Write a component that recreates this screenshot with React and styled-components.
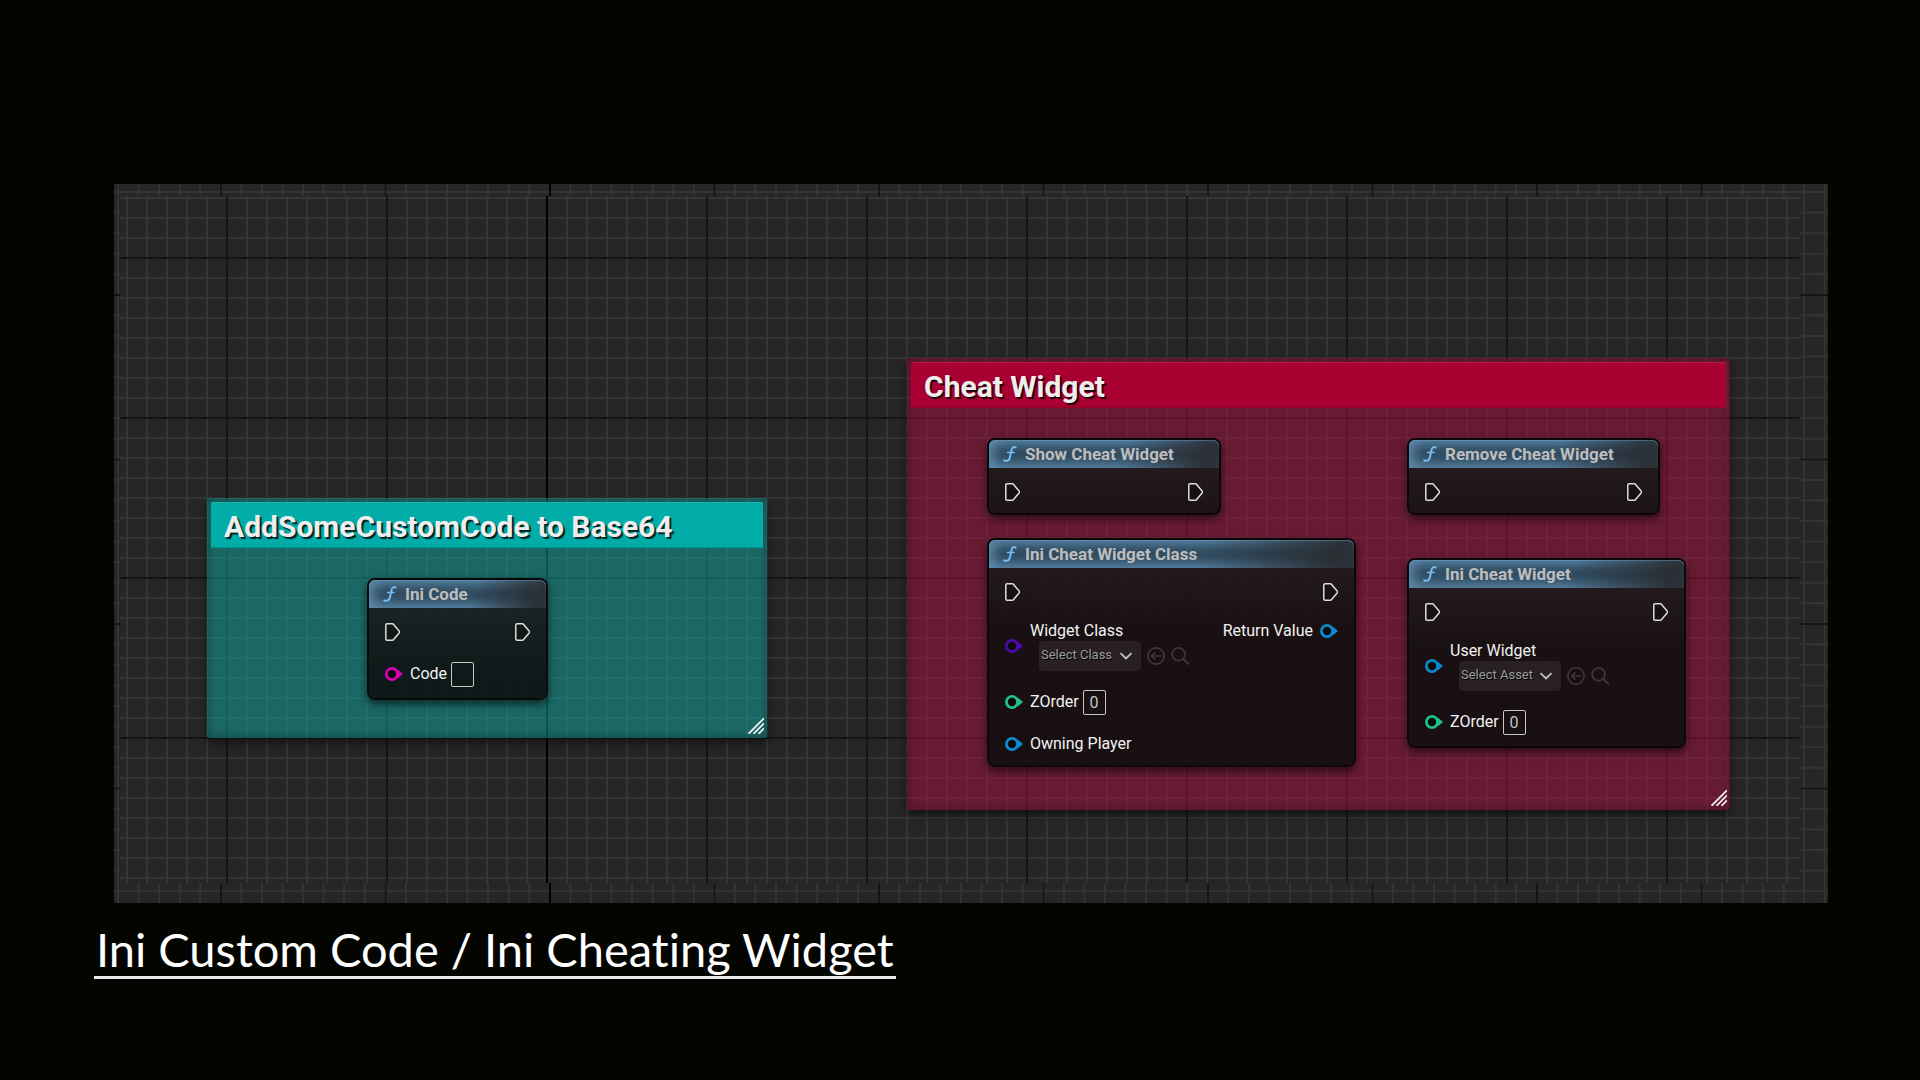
import React, { useId } from "react";
import styled, { createGlobalStyle } from "styled-components";

const GlobalStyle = createGlobalStyle`
  *, *::before, *::after { box-sizing: border-box; }
  body {
    margin: 0;
    background: #040500;
    color: #f0f0f0;
    font-family: Roboto, "Noto Sans", sans-serif;
  }
`;

const Page = styled.main`
  display: flex;
  flex-direction: column;
  min-height: 100vh;
  padding: 184px 92px 0 94px;
`;

const Backdrop = styled.section`
  --step: calc(329px / 16);
  --major: calc(329px / 2);
  margin-left: 20px;
  padding: 12px 28px 20px 6px;
  background-color: #262626;
  background-image:
    linear-gradient(90deg, #000 2px, transparent 2px),
    linear-gradient(90deg, #151515 2px, transparent 2px),
    linear-gradient(#151515 2px, transparent 2px),
    linear-gradient(90deg, #343434 2px, transparent 2px),
    linear-gradient(#343434 2px, transparent 2px);
  background-size: 2000px 100%, var(--major) 100%, 100% var(--major), var(--step) 100%, 100% var(--step);
  background-position: 435px 0, 106px 0, 0 110px, 3px 0, 0 7px;
`;

const Canvas = styled.div`
  position: relative;
  min-height: 687px;
  background-color: #262626;
  background-image:
    linear-gradient(90deg, #000 2px, transparent 2px),
    linear-gradient(90deg, #161616 2px, transparent 2px),
    linear-gradient(#161616 2px, transparent 2px),
    linear-gradient(90deg, #353535 2px, transparent 2px),
    linear-gradient(#353535 2px, transparent 2px);
  background-size: 2000px 100%, 160px 100%, 100% 160px, 20px 100%, 100% 20px;
  background-position: 426px 0, 106px 0, 0 61px, 6px 0, 0 1px;
`;

const Comment = styled.article`
  position: absolute;
  left: ${(p) => p.$x}px;
  top: ${(p) => p.$y}px;
  width: ${(p) => p.$w}px;
  height: ${(p) => p.$h}px;
  padding: 4px;
  border-radius: 2px;
  background: rgba(${(p) => p.$body}, 0.5);
  box-shadow:
    0 5px 10px rgba(0, 0, 0, 0.5),
    inset 0 0 0 1px rgba(${(p) => p.$body}, 0.15),
    inset 0 0 9px rgba(0, 0, 0, 0.4);
`;

const CommentTitle = styled.h2`
  margin: 0;
  height: 46px;
  padding: 0 13px;
  border-radius: 2px 2px 0 0;
  background: ${(p) => p.$color};
  box-shadow: inset 0 1px 1px rgba(255, 255, 255, 0.12), inset 0 -1px 1px rgba(0, 0, 0, 0.15);
  color: #eee;
  font-size: 30px;
  font-weight: 700;
  line-height: 50px;
  text-shadow: 2px 2px 1px rgba(0, 0, 0, 0.8);
  white-space: nowrap;
`;

const Grip = styled.svg`
  position: absolute;
  right: 3px;
  bottom: 4px;
`;

const NodeBox = styled.article`
  position: absolute;
  left: ${(p) => p.$x}px;
  top: ${(p) => p.$y}px;
  width: ${(p) => p.$w}px;
  border: 2px solid #090909;
  border-radius: 8px;
  background: linear-gradient(rgba(26, 26, 26, 0.88) 28px, rgba(14, 14, 14, 0.88) 90px);
  background-clip: padding-box;
  box-shadow: 0 4px 9px rgba(0, 0, 0, 0.6);
`;

const NodeHeader = styled.header`
  position: relative;
  isolation: isolate;
  display: flex;
  align-items: center;
  gap: 8px;
  height: 28px;
  padding: 0 13px 0 14px;
  border-radius: 6px 6px 0 0;
  background: #2b4558;
  box-shadow: inset 0 0 13px 4px #6090b5;

  &::after {
    content: "";
    position: absolute;
    inset: 0;
    z-index: -1;
    border-radius: inherit;
    background: linear-gradient(112deg, rgba(40, 42, 46, 0) 58%, rgba(40, 42, 46, 0.9) 94%);
    box-shadow: inset 0 1px 1px rgba(120, 165, 200, 0.45);
  }
`;

const NodeTitle = styled.h3`
  margin: 0;
  color: #bdbdbd;
  font-size: 17px;
  font-weight: 700;
  line-height: 28px;
  white-space: nowrap;
`;

const NodeBody = styled.div`
  display: flex;
  flex-direction: column;
  gap: 17px;
  padding: 13px 16px 10px 16px;
`;

const Row = styled.div`
  display: flex;
  justify-content: space-between;
  align-items: flex-start;
`;

const Pin = styled.div`
  display: flex;
  align-items: center;
  gap: 7px;
  min-height: ${(p) => p.$h || 22}px;
  color: #f2f2f2;
  font-size: 16px;
  line-height: 20px;
  white-space: nowrap;
`;

const ValueField = styled.div`
  display: flex;
  align-items: center;
  gap: 4px;
`;

const ValueInput = styled.input`
  width: 23px;
  height: 25px;
  padding: 0;
  border: 1px solid #c8c8c8;
  border-radius: 2px;
  background: transparent;
  color: #c4c4c4;
  font: 16px Roboto, sans-serif;
  text-align: center;
`;

const AssetField = styled.div`
  display: flex;
  flex-direction: column;
  padding-top: 1px;
`;

const AssetTools = styled.div`
  display: flex;
  align-items: center;
  gap: 6px;
  padding-left: 9px;
`;

const SelectWrap = styled.div`
  display: grid;
  align-items: center;
  & > * { grid-area: 1 / 1; }
  & > svg { justify-self: end; margin-right: 8px; pointer-events: none; }
`;

const AssetSelect = styled.select`
  appearance: none;
  width: 102px;
  height: 30px;
  padding: 0 24px 3px 2px;
  border: 0;
  border-radius: 4px;
  background: rgba(255, 255, 255, 0.07);
  color: #9c9c9c;
  font: 13px Roboto, sans-serif;
  text-shadow: 1px 1px 0 #000;
`;

const IconButton = styled.button`
  display: flex;
  padding: 0;
  border: 0;
  background: none;
  color: #403638;
`;

const Caption = styled.h1`
  margin: 19px 0 0;
  padding: 0 2px;
  align-self: flex-start;
  border-bottom: 3px solid #e8e8e8;
  color: #fff;
  font-family: Lato, "Noto Sans", sans-serif;
  font-size: 47px;
  font-weight: 400;
  font-variant-ligatures: none;
  line-height: 54px;
  white-space: nowrap;
`;

const ExecIcon = () => (
  <svg width="15" height="18" viewBox="0 0 15 18" fill="rgba(0,0,0,.25)" stroke="#dcdcdc" strokeWidth="1.5" strokeLinejoin="round">
    <path d="M2 .8h5.2c.6 0 1 .2 1.400.6l5.700 6.900c.3.4.3 1 0 1.400l-5.700 6.900c-.4.4-.8.6-1.400.6H2c-.8 0-1.200-.4-1.200-1.200V2C.8 1.200 1.200.8 2 .8z" />
  </svg>
);

const DataIcon = ({ color }) => (
  <svg width="18" height="14" viewBox="0 0 18 14">
    <path d="M13 2.800 18 7l-5 4.200z" fill={color} />
    <circle cx="7" cy="7" r="5.600" fill="#0b0b0b" stroke={color} strokeWidth="2.800" />
  </svg>
);

const FunctionIcon = () => (
  <svg width="14" height="16" viewBox="0 0 14 16" fill="none" stroke="#72bdf2" strokeLinecap="round">
    <path d="M12.600 1.500c-1.800-.9-3.500-.2-4 2.200L6.900 11.500c-.5 2.600-2.600 3.900-5.700 3" strokeWidth="2" />
    <path d="M4.500 6.500h6.600" strokeWidth="1.600" />
  </svg>
);

const Chevron = () => (
  <svg width="14" height="8" viewBox="0 0 14 8" fill="none" stroke="#c4c4c4" strokeWidth="1.800">
    <path d="M1.500 1.200 7 6.500l5.500-5.300" />
  </svg>
);

const BackIcon = () => (
  <svg width="18" height="18" viewBox="0 0 18 18" fill="none" stroke="currentColor" strokeWidth="1.700">
    <circle cx="9" cy="9" r="8.100" />
    <path d="M13.800 9H5M8.400 5.400 4.800 9l3.600 3.600" />
  </svg>
);

const SearchIcon = () => (
  <svg width="19" height="18" viewBox="0 0 19 18" fill="none" stroke="currentColor" strokeWidth="1.800">
    <circle cx="7.600" cy="7.300" r="6.400" />
    <path d="m12.300 11.800 5.700 5.700" />
  </svg>
);

const ResizeGrip = () => (
  <Grip width="16" height="16" viewBox="0 0 16 16" stroke="#f2f2f2" strokeWidth="1.800">
    <path d="M.5 15.800 16 .3M5.500 15.800 16 5.300M10.500 15.800l5.500-5.500" />
  </Grip>
);

const BLUE = "#0c8ad0";
const GREEN = "#1fbf8b";
const MAGENTA = "#d800b4";
const PURPLE = "#4b0aa8";

function ExecRow() {
  return (
    <Row>
      <Pin><ExecIcon /></Pin>
      <Pin><ExecIcon /></Pin>
    </Row>
  );
}

function ValuePin({ color, label, value }) {
  const id = useId();
  return (
    <Pin $h={28}>
      <DataIcon color={color} />
      <ValueField>
        <label htmlFor={id}>{label}</label>
        <ValueInput id={id} defaultValue={value} />
      </ValueField>
    </Pin>
  );
}

function AssetPin({ color, label, placeholder }) {
  const id = useId();
  return (
    <Pin>
      <DataIcon color={color} />
      <AssetField>
        <label htmlFor={id}>{label}</label>
        <AssetTools>
          <SelectWrap>
            <AssetSelect id={id}>
              <option>{placeholder}</option>
            </AssetSelect>
            <Chevron />
          </SelectWrap>
          <IconButton type="button" aria-label="Use selected"><BackIcon /></IconButton>
          <IconButton type="button" aria-label="Browse"><SearchIcon /></IconButton>
        </AssetTools>
      </AssetField>
    </Pin>
  );
}

function Node({ x, y, w, title, children }) {
  return (
    <NodeBox $x={x} $y={y} $w={w}>
      <NodeHeader>
        <FunctionIcon />
        <NodeTitle>{title}</NodeTitle>
      </NodeHeader>
      <NodeBody>
        <ExecRow />
        {children}
      </NodeBody>
    </NodeBox>
  );
}

export default function App() {
  return (
    <>
      <GlobalStyle />
      <Page>
        <Backdrop>
          <Canvas>
            <Comment $x={87} $y={302} $w={560} $h={240} $body="16, 168, 160">
              <CommentTitle $color="#02aca9">AddSomeCustomCode to Base64</CommentTitle>
              <ResizeGrip />
            </Comment>
            <Comment $x={787} $y={162} $w={823} $h={452} $body="168, 16, 62">
              <CommentTitle $color="#a90032">Cheat Widget</CommentTitle>
              <ResizeGrip />
            </Comment>

            <Node x={247} y={382} w={181} title="Ini Code">
              <ValuePin color={MAGENTA} label="Code" value="" />
            </Node>
            <Node x={867} y={242} w={234} title="Show Cheat Widget" />
            <Node x={1287} y={242} w={253} title="Remove Cheat Widget" />
            <Node x={867} y={342} w={369} title="Ini Cheat Widget Class">
              <Row>
                <AssetPin color={PURPLE} label="Widget Class" placeholder="Select Class" />
                <Pin>
                  <span>Return Value</span>
                  <DataIcon color={BLUE} />
                </Pin>
              </Row>
              <ValuePin color={GREEN} label="ZOrder" value="0" />
              <Pin>
                <DataIcon color={BLUE} />
                <span>Owning Player</span>
              </Pin>
            </Node>
            <Node x={1287} y={362} w={279} title="Ini Cheat Widget">
              <AssetPin color={BLUE} label="User Widget" placeholder="Select Asset" />
              <ValuePin color={GREEN} label="ZOrder" value="0" />
            </Node>
          </Canvas>
        </Backdrop>
        <Caption>Ini Custom Code / Ini Cheating Widget</Caption>
      </Page>
    </>
  );
}
